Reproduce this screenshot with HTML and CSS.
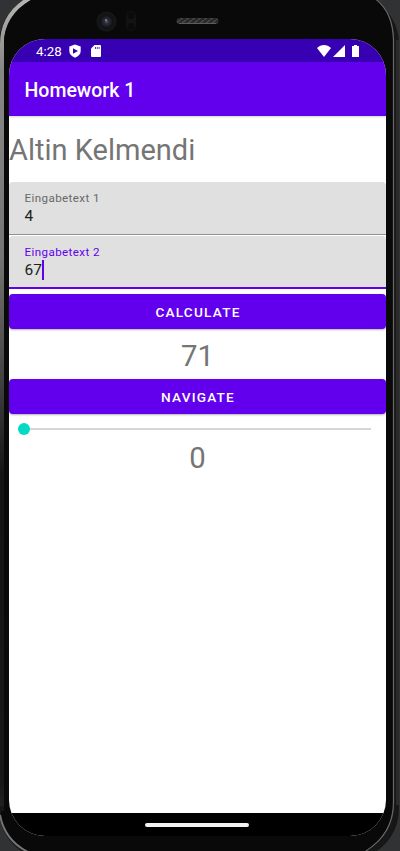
FILE: index.html
```html
<!DOCTYPE html>
<html lang="de">
<head>
<meta charset="utf-8">
<title>Homework 1</title>
<link rel="stylesheet" href="styles.css">
</head>
<body>
<div class="phone">
  <svg class="bezel" width="400" height="851" viewBox="0 0 400 851" aria-hidden="true">
    <defs>
      <linearGradient id="edge" x1="0" y1="0" x2="0" y2="851" gradientUnits="userSpaceOnUse">
        <stop offset="0" stop-color="#b4b4b0"/><stop offset=".08" stop-color="#888886"/>
        <stop offset=".3" stop-color="#777573"/><stop offset=".44" stop-color="#444"/>
        <stop offset=".56" stop-color="#151313"/><stop offset=".92" stop-color="#181818"/>
        <stop offset="1" stop-color="#333"/>
      </linearGradient>
      <radialGradient id="lens"><stop offset="0" stop-color="#5a6178"/><stop offset=".2" stop-color="#2c2f3e"/><stop offset=".5" stop-color="#1b1c21"/><stop offset=".6" stop-color="#121213"/><stop offset="1" stop-color="#181818"/></radialGradient>
      <pattern id="mesh" width="6" height="5" patternUnits="userSpaceOnUse"><rect width="6" height="5" fill="#292929"/><path d="M0 5 6 0" stroke="#484848" stroke-width="1.5"/></pattern>
    </defs>
    <rect x="-1" y="-7" width="400" height="867" rx="51" fill="#171717"/>
    <path d="M2 806V44C2 21 14 6 34-4" fill="none" stroke="url(#edge)" stroke-width="4"/>
    <path d="M372-3c15 9 21 23 21.500 43V802c0 22-10 38-28 49" fill="none" stroke="#666" stroke-width="1.300"/>
    <path d="M397.500 40V805" stroke="#2d2b29" stroke-width="3"/>
    <path d="M4 811V44C4 22 17 7 38-4H370c15 9 22 23 22.500 43V802c0 22-10 38-28 49H28C13 843 1 829 1 811z" fill="#0a090a"/>
    <path d="M0 815c3 16 12 29 28 37" fill="none" stroke="#777" stroke-width="1.800"/>
    <circle cx="106.500" cy="21.500" r="10" fill="url(#lens)"/>
    <circle cx="106" cy="20" r=".8" fill="#b0b8cf"/>
    <rect x="126" y="11" width="10" height="20" rx="5" fill="#131313"/>
    <circle cx="131" cy="15.500" r="3.500" fill="#0b0b0b"/><circle cx="131" cy="26.500" r="3.500" fill="#0b0b0b"/>
    <rect x="176.500" y="18" width="42" height="6" rx="3" fill="url(#mesh)"/>
    <path d="M179 23.500H216" stroke="#5c5c5c"/>
  </svg>
  <main class="screen">
    <div class="status">
      <span class="time">4:28</span>
      <svg class="shield" width="12" height="14" viewBox="0 0 12 14"><path d="M6 .5 11.700 2.500V7C11.700 10 9.400 12.500 6 13.700 2.600 12.500.3 10 .3 7V2.500z" fill="#fff"/><path d="M4 4.300 9 7 4 9.700z" fill="#3700b3"/></svg>
      <svg class="card" width="10" height="12" viewBox="0 0 10 12"><path d="M3.500 0H9q1 0 1 1V11q0 1-1 1H1q-1 0-1-1V3.500z" fill="#fff"/><path d="M4.500 2V4M6.300 2V4M8.100 2V4" stroke="#3700b3" stroke-width=".8"/></svg>
      <span class="spacer"></span>
      <svg width="14" height="12" viewBox="0 0 14 12"><path d="M0 3C4-1 10-1 14 3L7 12z" fill="#fff"/></svg>
      <svg class="signal" width="12" height="12" viewBox="0 0 12 12"><path d="M12 0V12H0z" fill="#fff"/></svg>
      <svg class="battery" width="7" height="12" viewBox="0 0 7 12"><path d="M2 0H5V1H7V12H0V1H2z" fill="#fff"/></svg>
    </div>
    <header class="appbar">Homework 1</header>
    <section class="content">
      <h1 class="name">Altin Kelmendi</h1>
      <div class="field"><span class="label">Eingabetext 1</span><span class="value">4</span></div>
      <div class="field focused"><span class="label">Eingabetext 2</span><span class="value">67<i class="caret"></i></span></div>
      <button class="button">CALCULATE</button>
      <div class="result">71</div>
      <button class="button">NAVIGATE</button>
      <div class="slider"><span class="thumb"></span><span class="track"></span></div>
      <div class="count">0</div>
    </section>
    <nav class="navbar"><span class="handle"></span></nav>
  </main>
</div>
</body>
</html>
```
FILE: styles.css
```css
* { box-sizing: border-box; }
body { margin: 0; background: #303234; font-family: Roboto, sans-serif; }
.phone { position: relative; width: 400px; height: 851px; padding: 39px 14px 15px 9px; overflow: hidden; }
.bezel { position: absolute; top: 0; left: 0; }
.screen { position: relative; height: 797px; display: flex; flex-direction: column; overflow: hidden; border-radius: 36px; background: #fff; }
.status { height: 23px; flex: none; display: flex; align-items: center; padding: 1px 27px 0; background: #3700b3; color: #fff; }
.time { width: 26px; font-size: 13.300px; line-height: 23px; white-space: nowrap; }
.shield { margin-left: 7px; }
.card { margin-left: 10px; }
.spacer { flex: 1; }
.signal { margin-left: 2px; }
.battery { margin-left: 7px; }
.appbar { position: relative; height: 54px; flex: none; padding-left: 15.500px; background: #6200ee; color: #fff; font-size: 19.500px; font-weight: 500; line-height: 57px; box-shadow: 0 1px 2px rgba(0,0,0,.18); }
.content { flex: 1; display: flex; flex-direction: column; }
.name { height: 66px; margin: 0; color: #757575; font-size: 29px; font-weight: 400; line-height: 69px; white-space: nowrap; }
.field { height: 53px; flex: none; display: flex; flex-direction: column; padding: 9px 15.500px 0; border-radius: 4px 4px 0 0; border-bottom: 1px solid #929292; background: #e0e0e0; color: #202020; }
.field + .field { margin-top: 1px; }
.label { color: #696969; font-size: 11.600px; line-height: 14px; letter-spacing: .4px; }
.value { display: flex; align-items: center; font-size: 15.500px; line-height: 20px; height: 20px; margin-top: 1px; }
.focused { border-bottom: 2px solid #6200ee; }
.focused .label { color: #6200ee; }
.caret { width: 2px; height: 20px; flex: none; }
.focused .caret { background: #6200ee; }
.button { height: 35px; flex: none; margin: 5px 0 0; padding: 1px 0 0 1px; border: 0; border-radius: 4px; background: #6200ee; color: #fff; box-shadow: 0 1px 2px rgba(0,0,0,.3); font: 500 13.600px/34px Roboto, sans-serif; letter-spacing: 1.220px; }
.result { height: 45px; color: #757575; font-size: 29.300px; line-height: 55px; text-align: center; }
.slider { display: flex; align-items: center; height: 29px; padding: 0 15px 0 9px; }
.thumb { width: 12px; height: 12px; border-radius: 50%; background: #03dac5; }
.track { flex: 1; height: 2px; background: #d6d6d6; }
.count { height: 34px; color: #757575; font-size: 29.300px; line-height: 31px; text-align: center; }
.navbar { height: 23px; flex: none; display: flex; align-items: center; justify-content: center; padding-right: 1px; background: #000; }
.handle { width: 104px; height: 4px; border-radius: 2px; background: #f2f2f2; }
```
